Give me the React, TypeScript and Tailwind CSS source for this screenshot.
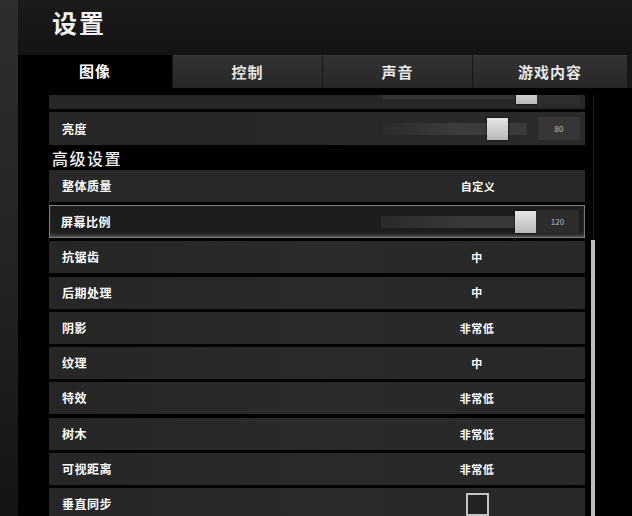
import React from "react";

type Row =
  | { kind: "value"; label: string; value: string }
  | { kind: "check"; label: string };

const rows: Row[] = [
  { kind: "value", label: "抗锯齿", value: "中" },
  { kind: "value", label: "后期处理", value: "中" },
  { kind: "value", label: "阴影", value: "非常低" },
  { kind: "value", label: "纹理", value: "中" },
  { kind: "value", label: "特效", value: "非常低" },
  { kind: "value", label: "树木", value: "非常低" },
  { kind: "value", label: "可视距离", value: "非常低" },
  { kind: "check", label: "垂直同步" },
];

const tabs = [
  { name: "图像", w: "w-[154px]", active: true },
  { name: "控制", w: "w-[149px]", active: false },
  { name: "声音", w: "w-[149px]", active: false },
  { name: "游戏内容", w: "w-[154px]", active: false },
];

const font = { fontFamily: '"Noto Sans CJK SC", "Noto Sans", sans-serif' };

const Thumb = () => (
  <div className="h-[22px] w-[21px] bg-gradient-to-b from-[#e6e6e6] to-[#b9b9b9] shadow-[0_0_2px_#000]" />
);

const App: React.FC = () => {
  return (
    <div
      className="flex h-[516px] w-[632px] overflow-hidden bg-black text-white"
      style={font}
    >
      {/* left edge */}
      <div className="w-[18px] shrink-0 bg-gradient-to-b from-[#2e2e2e] via-[#242424] to-[#141414]" />

      <div className="flex flex-1 flex-col">
        {/* header */}
        <div className="flex h-[55px] shrink-0 items-center bg-gradient-to-b from-[#1a1a1a] to-[#141414] pb-[10px] pl-[34px]">
          <h1 className="text-[25px] font-bold tracking-[2px] text-[#f2f2f2]">
            设置
          </h1>
        </div>

        {/* tabs */}
        <div className="flex h-[33px] shrink-0 gap-[1px] bg-[#161616]">
          {tabs.map((t) => (
            <div
              key={t.name}
              className={
                t.active
                  ? `${t.w} flex items-center justify-center bg-black text-[15px] font-bold tracking-[1px]`
                  : `${t.w} flex items-center justify-center border-t border-[#3a3a3a] bg-gradient-to-b from-[#333333] to-[#272727] text-[15px] font-bold tracking-[1px] text-[#e8e8e8]`
              }
            >
              {t.name}
            </div>
          ))}
        </div>

        {/* content */}
        <div className="flex flex-1 overflow-hidden pt-[7px]">
          <div className="ml-[31px] flex w-[536px] flex-col overflow-hidden">
            {/* partially scrolled row */}
            <div className="-mt-[18px] flex h-[32px] shrink-0 items-center bg-[#272727]">
              <div className="w-[333px]" />
              <div className="flex h-[12px] flex-1 items-center justify-end bg-[#343434]">
                <Thumb />
              </div>
              <div className="mr-[5px] h-[23px] w-[43px] bg-[#2e2e2e]" />
            </div>

            {/* brightness */}
            <div className="mt-[3px] flex h-[33px] shrink-0 items-center bg-gradient-to-r from-[#262626] to-[#2a2a2a]">
              <span className="w-[333px] pl-[13px] text-[12px] font-bold tracking-[0.5px]">
                亮度
              </span>
              <div className="relative h-[12px] w-[145px] bg-gradient-to-r from-[#2b2b2b] via-[#3c3c3c] to-[#3a3a3a]">
                <div className="absolute left-[105px] top-[-5px]">
                  <Thumb />
                </div>
              </div>
              <div className="ml-[11px] flex h-[23px] w-[42px] items-center justify-center bg-[#363636] text-[8px] text-[#bdbdbd]">
                80
              </div>
            </div>

            <div className="flex h-[25px] shrink-0 items-center pl-[3px] text-[16px] font-medium tracking-[1.5px] text-[#f0f0f0]">
              高级设置
            </div>

            {/* overall quality */}
            <div className="flex h-[32px] shrink-0 items-center bg-[#282828]">
              <span className="w-[333px] pl-[13px] text-[12px] font-bold tracking-[0.5px]">
                整体质量
              </span>
              <span className="w-[192px] text-center text-[11px] font-bold tracking-[0.5px]">
                自定义
              </span>
            </div>

            {/* screen scale, selected */}
            <div className="mt-[3px] flex h-[33px] shrink-0 items-center border-[1.5px] border-[#7c7c7c] bg-[#1d1d1d] shadow-[inset_0_-3px_4px_-2px_#6a6a6a]">
              <span className="w-[331px] pl-[11px] text-[12px] font-bold tracking-[0.5px]">
                屏幕比例
              </span>
              <div className="flex h-[12px] w-[155px] items-center justify-end bg-gradient-to-r from-[#2a2a2a] via-[#383838] to-[#3a3a3a]">
                <Thumb />
              </div>
              <div className="flex h-[23px] w-[43px] items-center justify-center bg-[#2c2c2c] text-[8px] text-[#bdbdbd]">
                120
              </div>
            </div>

            {rows.map((r) => (
              <div
                key={r.label}
                className="mt-[3.3px] flex h-[32px] shrink-0 items-center bg-gradient-to-r from-[#262626] via-[#2a2a2a] to-[#282828]"
              >
                <span className="w-[333px] pl-[13px] text-[12px] font-bold tracking-[0.5px]">
                  {r.label}
                </span>
                <div className="flex w-[190px] justify-center">
                  {r.kind === "value" ? (
                    <span className="text-[11px] font-bold tracking-[0.5px]">
                      {r.value}
                    </span>
                  ) : (
                    <div className="mt-[1px] h-[23px] w-[23px] border-2 border-[#c4c4c4] bg-[#222]" />
                  )}
                </div>
              </div>
            ))}
          </div>

          {/* scrollbar */}
          <div className="ml-[6px] flex w-[4px] flex-col">
            <div className="mx-auto h-[145px] w-[1px] bg-[#1e1e1e]" />
            <div className="flex-1 bg-[#bdbdbd]" />
          </div>
        </div>
      </div>
    </div>
  );
};

export default App;
